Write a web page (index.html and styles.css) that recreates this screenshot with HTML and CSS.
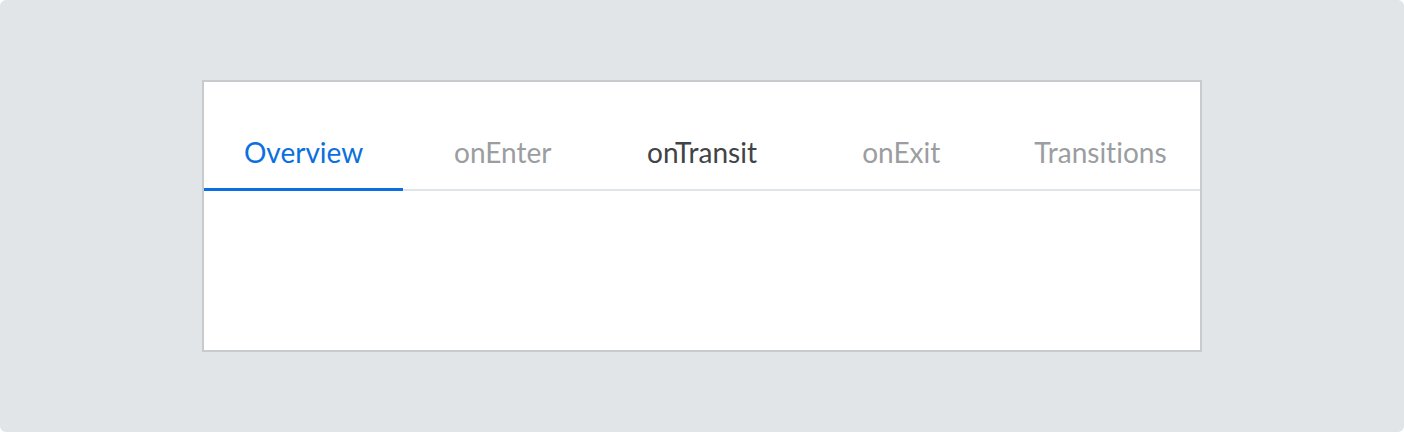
FILE: index.html
```html
<!DOCTYPE html>
<html>
<head>
<meta charset="utf-8">
<link rel="stylesheet" href="styles.css">
</head>
<body>
<div class="stage">
  <div class="card">
    <div class="tabs">
      <div class="tab active">Overview</div>
      <div class="tab">onEnter</div>
      <div class="tab hover">onTransit</div>
      <div class="tab">onExit</div>
      <div class="tab">Transitions</div>
    </div>
    <div class="panel"></div>
  </div>
</div>
</body>
</html>
```
FILE: styles.css
```css
html, body {
  margin: 0;
  padding: 0;
  background: #ffffff;
}
.stage {
  width: 1404px;
  height: 432px;
  box-sizing: border-box;
  background: #e1e5e8;
  border-radius: 6px;
  padding: 80px 0 0 202px;
}
.card {
  width: 1000px;
  height: 272px;
  box-sizing: border-box;
  background: #ffffff;
  border: 2px solid #c8cbcd;
  display: flex;
  flex-direction: column;
}
.tabs {
  display: flex;
  border-bottom: 2px solid #e1e5e8;
}
.tab {
  flex: 1 1 0;
  height: 107px;
  display: flex;
  align-items: center;
  justify-content: center;
  padding-top: 33px;
  box-sizing: border-box;
  font-family: "Lato", "Liberation Sans", sans-serif;
  font-size: 28px;
  font-variant-ligatures: none;
  font-feature-settings: "liga" 0, "dlig" 0;
  color: #9b9da1;
  position: relative;
}
.tab.active {
  color: #0a6fe0;
}
.tab.active::after {
  content: "";
  position: absolute;
  left: 0;
  right: 0;
  bottom: -2px;
  height: 3px;
  background: #0a6fe0;
}
.tab.hover {
  color: #414446;
}
.panel {
  flex: 1;
}
```
